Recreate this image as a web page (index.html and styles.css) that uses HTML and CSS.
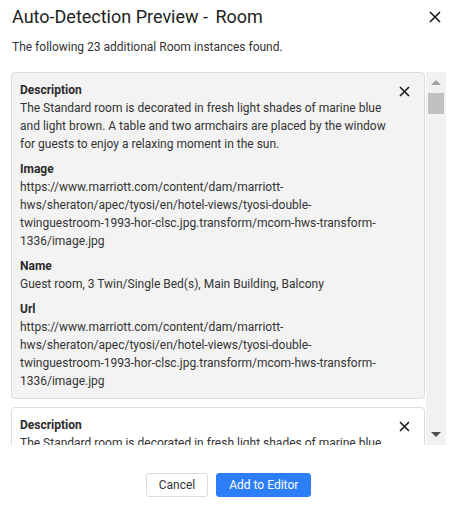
FILE: index.html
```html
<!DOCTYPE html>
<html lang="en">
<head>
    <meta charset="UTF-8">
    <meta name="viewport" content="width=device-width, initial-scale=1.0">
    <title>Auto-Detection Preview</title>
    <link rel="stylesheet" href="styles.css">
</head>
<body>
    <div class="dialog">
        <div class="dialog-header">
            <h1>Auto-Detection Preview - <span class="entity">Room</span></h1>
            <button class="icon-btn close-dialog" type="button" aria-label="Close">
                <svg width="12" height="12" viewBox="0 0 12 12"><path d="M1 1L11 11M11 1L1 11" stroke="#1a1a1a" stroke-width="1.6"/></svg>
            </button>
        </div>
        <p class="subtitle">The following 23 additional Room instances found.</p>

        <div class="results">
            <div class="results-list">
                <div class="instance">
                    <button class="icon-btn remove" type="button" aria-label="Remove">
                        <svg width="11" height="11" viewBox="0 0 11 11"><path d="M1 1L10 10M10 1L1 10" stroke="#1a1a1a" stroke-width="1.6"/></svg>
                    </button>
                    <div class="field">
                        <div class="field-name">Description</div>
                        <div class="field-value">The Standard room is decorated in fresh light shades of marine blue and light brown. A table and two armchairs are placed by the window for guests to enjoy a relaxing moment in the sun.</div>
                    </div>
                    <div class="field">
                        <div class="field-name">Image</div>
                        <div class="field-value">https://www.marriott.com/content/dam/marriott-hws/sheraton/apec/tyosi/en/hotel-views/tyosi-double-twinguestroom-1993-hor-clsc.jpg.transform/mcom-hws-transform-1336/image.jpg</div>
                    </div>
                    <div class="field">
                        <div class="field-name">Name</div>
                        <div class="field-value">Guest room, 3 Twin/Single Bed(s), Main Building, Balcony</div>
                    </div>
                    <div class="field">
                        <div class="field-name">Url</div>
                        <div class="field-value">https://www.marriott.com/content/dam/marriott-hws/sheraton/apec/tyosi/en/hotel-views/tyosi-double-twinguestroom-1993-hor-clsc.jpg.transform/mcom-hws-transform-1336/image.jpg</div>
                    </div>
                </div>

                <div class="instance instance-alt">
                    <button class="icon-btn remove" type="button" aria-label="Remove">
                        <svg width="11" height="11" viewBox="0 0 11 11"><path d="M1 1L10 10M10 1L1 10" stroke="#1a1a1a" stroke-width="1.6"/></svg>
                    </button>
                    <div class="field">
                        <div class="field-name">Description</div>
                        <div class="field-value">The Standard room is decorated in fresh light shades of marine blue and light brown. A table and two armchairs are placed by the window for guests to enjoy a relaxing moment in the sun.</div>
                    </div>
                    <div class="field">
                        <div class="field-name">Image</div>
                        <div class="field-value">https://www.marriott.com/content/dam/marriott-hws/sheraton/apec/tyosi/en/hotel-views/tyosi-double-twinguestroom-1993-hor-clsc.jpg.transform/mcom-hws-transform-1336/image.jpg</div>
                    </div>
                </div>
            </div>

            <div class="scrollbar">
                <div class="scroll-arrow up"></div>
                <div class="scroll-track">
                    <div class="scroll-thumb"></div>
                </div>
                <div class="scroll-arrow down"></div>
            </div>
        </div>

        <div class="dialog-footer">
            <button class="btn" type="button">Cancel</button>
            <button class="btn btn-primary" type="button">Add to Editor</button>
        </div>
    </div>
</body>
</html>
```

FILE: styles.css
```css
body {
    margin: 0;
    font-family: Roboto, "Liberation Sans", Arial, sans-serif;
    color: #333;
    background-color: #fff;
}
.dialog {
    width: 458px;
    height: 509px;
    box-sizing: border-box;
    padding: 5px 12px 0 11px;
    display: flex;
    flex-direction: column;
}
.dialog-header {
    display: flex;
    align-items: center;
    justify-content: space-between;
    height: 24px;
}
h1 {
    margin: 0 0 0 1px;
    font-size: 18px;
    font-weight: 400;
    line-height: 24px;
    color: #222;
}
.entity {
    margin-left: 3px;
}
.icon-btn {
    border: none;
    background: none;
    padding: 0;
    cursor: pointer;
    display: flex;
    align-items: center;
    justify-content: center;
}
.close-dialog {
    width: 20px;
    height: 20px;
    margin-right: 1px;
}
.subtitle {
    margin: 9px 0 0 1px;
    font-size: 12px;
    line-height: 18px;
    color: #333;
}
.results {
    margin-top: 16px;
    height: 373px;
    display: flex;
}
.results-list {
    flex: 1;
    overflow: hidden;
    display: flex;
    flex-direction: column;
    gap: 8px;
}
.instance {
    position: relative;
    flex-shrink: 0;
    background-color: #f3f3f3;
    border: 1px solid #dcdcdc;
    border-radius: 4px;
    padding: 8px 32px 8px 8px;
    display: flex;
    flex-direction: column;
    gap: 7px;
}
.instance-alt {
    background-color: #fff;
}
.remove {
    position: absolute;
    top: 12px;
    right: 14px;
    width: 12px;
    height: 12px;
}
.field {
    font-size: 12px;
    line-height: 18px;
}
.field-name {
    font-weight: 700;
    color: #2b2b2b;
}
.field-value {
    color: #333;
}
.scrollbar {
    width: 20px;
    margin-left: 1px;
    background-color: #f1f1f1;
    display: flex;
    flex-direction: column;
}
.scroll-arrow {
    height: 21px;
    display: flex;
    align-items: center;
    justify-content: center;
}
.scroll-arrow::before {
    content: "";
    border-left: 5px solid transparent;
    border-right: 5px solid transparent;
}
.scroll-arrow.up::before {
    border-bottom: 5px solid #a3a3a3;
}
.scroll-arrow.down::before {
    border-top: 5px solid #505050;
}
.scroll-track {
    flex: 1;
    padding: 0 2px;
}
.scroll-thumb {
    height: 21px;
    background-color: #c1c1c1;
}
.dialog-footer {
    margin-top: 28px;
    display: flex;
    justify-content: center;
    gap: 8px;
}
.btn {
    height: 24px;
    padding: 0 12px;
    font-family: inherit;
    font-size: 12px;
    color: #333;
    background-color: #fff;
    border: 1px solid #dcdcdc;
    border-radius: 3px;
    cursor: pointer;
}
.btn-primary {
    padding: 0 12px;
    color: #fff;
    background-color: #2d7ff9;
    border-color: #2d7ff9;
}
```
